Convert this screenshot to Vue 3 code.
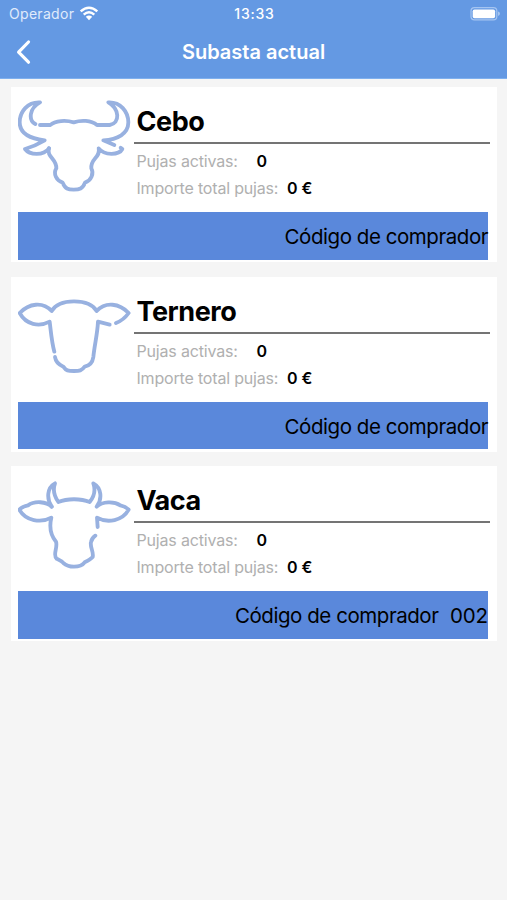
<template>
  <div class="screen">
    <header class="header">
      <div class="status-bar">
        <div class="carrier">
          <span class="carrier-name">Operador</span>
          <svg class="wifi" width="20" height="15" viewBox="0 0 20 15">
            <path d="M1.7 5.4 Q10 -1.8 18.3 5.4" />
            <path d="M4.7 8.6 Q10 3.9 15.3 8.6" />
            <path class="wifi-dot" d="M6.8 10.8 Q10 8.2 13.2 10.8 L10 14.2 Z" />
          </svg>
        </div>
        <span class="clock">13:33</span>
        <svg class="battery" width="31" height="14" viewBox="0 0 31 14">
          <rect class="battery-case" x="1" y="0.7" width="25.8" height="12.2" rx="3.4" />
          <rect class="battery-level" x="2.7" y="2.4" width="22.4" height="8.8" rx="1.8" />
          <path class="battery-tip" d="M28 4.6 Q30 5.2 30 6.8 Q30 8.4 28 9 Z" />
        </svg>
      </div>
      <div class="nav-bar">
        <svg class="back" width="16" height="26" viewBox="0 0 16 26">
          <path d="M13.5 3 L3.6 13.2 L13.5 23.2" />
        </svg>
        <h1 class="title">Subasta actual</h1>
      </div>
    </header>

    <main class="lots">
      <section v-for="lot in lots" :key="lot.name" class="card">
        <div class="card-body">
          <svg class="animal" width="113" height="96" :viewBox="lot.viewBox">
            <path v-for="d in lot.paths" :key="d" :d="d" />
          </svg>
          <div class="info">
            <h2 class="name">{{ lot.name }}</h2>
            <div class="row bids">
              <span class="label">Pujas activas:</span>
              <span class="value">{{ lot.bids }}</span>
            </div>
            <div class="row amount">
              <span class="label">Importe total pujas:</span>
              <span class="value">{{ lot.amount }} €</span>
            </div>
          </div>
        </div>
        <div class="buyer">
          <span class="buyer-label">Código de comprador</span>
          <span v-if="lot.buyer" class="buyer-code">{{ lot.buyer }}</span>
        </div>
      </section>
    </main>
  </div>
</template>

<script setup>
import { ref } from 'vue'

const lots = ref([
  {
    name: 'Cebo',
    bids: 0,
    amount: 0,
    buyer: '',
    viewBox: '31 22 339 288',
    paths: [
      // horns and forehead
      'M83 103 C62 92 64 56 97 38 C60 36 36 66 36 98 C36 130 66 147 111 152 C94 162 73 172 52 178 C66 197 107 199 124 176',
      'M97 106 H128 C142 92 176 91 198 98 C220 91 250 91 268 106 H306 C338 100 336 58 302 38 C338 36 362 66 362 98 C362 132 330 150 287 152 L320 166',
      // muzzle and right ear
      'M124 176 C116 203 147 206 146 236 C136 252 146 273 165 279 C173 298 181 300 198 300 C215 300 225 298 232 279 C250 273 260 252 251 236 C248 206 280 203 273 176 C290 198 334 197 344 178 L339 174'
    ]
  },
  {
    name: 'Ternero',
    bids: 0,
    amount: 0,
    buyer: '',
    viewBox: '31 19 339 288',
    paths: [
      'M140 213 C132 184 130 155 126 123 C94 140 55 132 36 97 C64 68 105 62 132 91 C145 68 170 62 199 62 C229 62 254 68 267 91 C294 62 335 68 363 97 C353 111 341 121 325 127',
      'M306 132 L271 123 C269 163 261 189 257 229 C255 244 246 255 231 258 C222 270 216 271 199 271 C181 271 175 270 167 258 C153 252 144 244 142 229'
    ]
  },
  {
    name: 'Vaca',
    bids: 0,
    amount: 0,
    buyer: '002',
    viewBox: '31 23 339 288',
    paths: [
      // left ear and muzzle
      'M132 115 C116 99 80 97 61 111 C50 113 42 117 35 124 C54 158 100 165 131 148 C124 178 129 201 145 220 C151 239 134 260 147 271 C155 275 162 277 167 284 C177 293 187 295 199 295 C213 295 223 293 231 282 C239 278 249 273 255 266 C259 250 246 237 250 221 C252 212 257 206 263 202',
      // horns and right ear
      'M132 115 C116 91 118 58 142 45 C134 67 140 84 152 101 C178 90 220 90 246 101 C260 84 264 65 257 45 C281 58 285 91 267 115 C284 99 319 98 338 111 C348 113 356 117 363 124 C345 157 300 166 268 148 L270 176'
    ]
  }
])
</script>

<style>
body {
  margin: 0;
  background: #f5f5f5;
}
</style>

<style scoped>
.screen {
  min-height: 100vh;
  background: #f5f5f5;
  color: #000;
  font-family: Inter, 'Liberation Sans', sans-serif;
}

.header {
  box-sizing: border-box;
  height: 79px;
  background: #6499e3;
  border-bottom: 1px solid #7fb0ee;
  color: #fff;
}

.status-bar {
  display: grid;
  grid-template-columns: 1fr auto 1fr;
  align-items: center;
  height: 27px;
  padding: 0 6px 0 9px;
  font-size: 14px;
}

.carrier {
  display: flex;
  align-items: center;
  gap: 5px;
}

.carrier-name {
  color: #e0ebfb;
  letter-spacing: 0.3px;
}

.wifi path {
  fill: none;
  stroke: #fff;
  stroke-width: 2.5;
}

.wifi .wifi-dot {
  fill: #fff;
  stroke: none;
}

.clock {
  margin-right: 1px;
  font-weight: 500;
  letter-spacing: 0.8px;
}

.battery {
  justify-self: end;
}

.battery-case {
  fill: none;
  stroke: #a5c5f1;
  stroke-width: 1.2;
}

.battery-level {
  fill: #fff;
}

.battery-tip {
  fill: #a5c5f1;
}

.nav-bar {
  display: grid;
  grid-template-columns: 1fr auto 1fr;
  align-items: center;
  height: 50px;
  padding: 0 15px;
}

.back path {
  fill: none;
  stroke: #fff;
  stroke-width: 3.2;
  stroke-linecap: round;
  stroke-linejoin: round;
}

.title {
  margin: 0;
  font-size: 20px;
  font-weight: 600;
  letter-spacing: 0;
}

.lots {
  display: flex;
  flex-direction: column;
  gap: 14.5px;
  padding: 8px 10px 0 10.5px;
}

.card {
  box-sizing: border-box;
  height: 175px;
  padding: 0 7px 0 7.5px;
  background: #fff;
}

.card-body {
  display: flex;
  gap: 3px;
  height: 125px;
}

.animal {
  flex: none;
  margin-top: 10px;
}

.animal path {
  fill: none;
  stroke: #98b1e0;
  stroke-width: 11.5;
  stroke-linecap: round;
  stroke-linejoin: round;
}

.info {
  flex: 1;
}

.name {
  box-sizing: border-box;
  height: 57px;
  margin: 0;
  padding: 14px 0 0 2.5px;
  border-bottom: 2px solid #747474;
  font-size: 27px;
  font-weight: 700;
  line-height: 41px;
  letter-spacing: -0.45px;
}

.row {
  display: flex;
  height: 27px;
  padding-left: 2.5px;
  font-size: 16px;
  line-height: 27px;
}

.bids {
  margin-top: 4px;
}

.label {
  color: #b0b0b0;
  letter-spacing: -0.18px;
}

.bids .label {
  width: 120px;
}

.amount .label {
  width: 150.5px;
}

.value {
  font-weight: 600;
}

.buyer {
  display: flex;
  justify-content: flex-end;
  gap: 11.5px;
  width: 470px;
  height: 47.5px;
  background: #5a88db;
  font-size: 20.5px;
  line-height: 49px;
  white-space: nowrap;
}

.buyer-label {
  letter-spacing: -0.45px;
}

.buyer-code {
  letter-spacing: -0.1px;
}
</style>
